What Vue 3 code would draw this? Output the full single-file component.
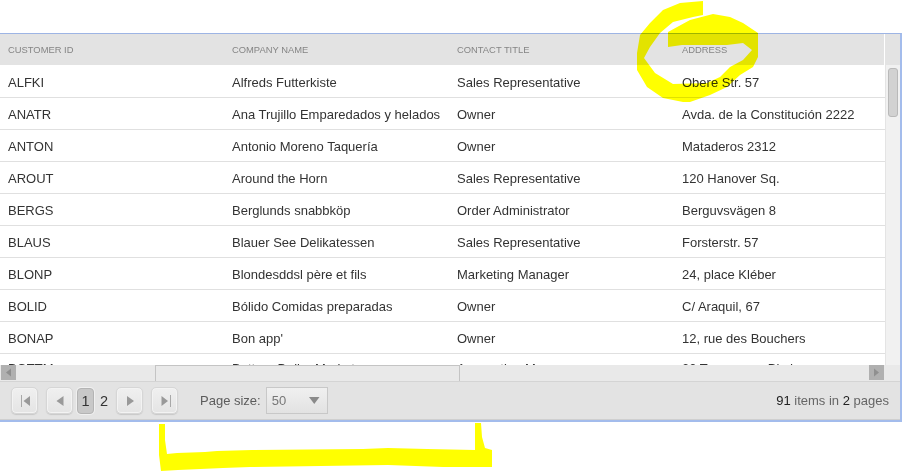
<script setup>
const columns = ['Customer ID', 'Company Name', 'Contact Title', 'Address']
const rows = [
  ['ALFKI', 'Alfreds Futterkiste', 'Sales Representative', 'Obere Str. 57'],
  ['ANATR', 'Ana Trujillo Emparedados y helados', 'Owner', 'Avda. de la Constitución 2222'],
  ['ANTON', 'Antonio Moreno Taquería', 'Owner', 'Mataderos 2312'],
  ['AROUT', 'Around the Horn', 'Sales Representative', '120 Hanover Sq.'],
  ['BERGS', 'Berglunds snabbköp', 'Order Administrator', 'Berguvsvägen 8'],
  ['BLAUS', 'Blauer See Delikatessen', 'Sales Representative', 'Forsterstr. 57'],
  ['BLONP', 'Blondesddsl père et fils', 'Marketing Manager', '24, place Kléber'],
  ['BOLID', 'Bólido Comidas preparadas', 'Owner', 'C/ Araquil, 67'],
  ['BONAP', "Bon app'", 'Owner', '12, rue des Bouchers'],
  ['BOTTM', 'Bottom-Dollar Markets', 'Accounting Manager', '23 Tsawassen Blvd.']
]
</script>

<template>
  <div class="page">
    <div class="grid">
      <div class="head">
        <div class="head-cols">
          <div v-for="c in columns" :key="c" class="head-cell">{{ c }}</div>
        </div>
        <div class="head-corner"></div>
      </div>

      <div class="body">
        <div class="rows">
          <div v-for="r in rows" :key="r[0]" class="row">
            <div v-for="(v, i) in r" :key="i" class="cell">{{ v }}</div>
          </div>
        </div>
        <div class="vscroll"><div class="vthumb"></div></div>
      </div>

      <div class="hbar">
        <div class="harrow">
          <svg width="15" height="15" viewBox="0 0 15 15"><path d="M10 3.500v8L5 7.500z" fill="#8f8f8f" /></svg>
        </div>
        <div class="htrack"><div class="hthumb"></div></div>
        <div class="harrow">
          <svg width="15" height="15" viewBox="0 0 15 15"><path d="M5 3.500v8l5-4z" fill="#8f8f8f" /></svg>
        </div>
        <div class="hcorner"></div>
      </div>

      <div class="pager">
        <button class="pbtn">
          <svg width="14" height="14" viewBox="0 0 14 14"><path d="M3.500 1v12" stroke="#a8a8a8" fill="none" /><path d="M12 2v10L5.500 7z" fill="#999" /></svg>
        </button>
        <button class="pbtn prev">
          <svg width="14" height="14" viewBox="0 0 14 14"><path d="M10.500 2v10L3.500 7z" fill="#999" /></svg>
        </button>
        <span class="pnum current">1</span>
        <span class="pnum">2</span>
        <button class="pbtn next">
          <svg width="14" height="14" viewBox="0 0 14 14"><path d="M4 2v10l7-5z" fill="#999" /></svg>
        </button>
        <button class="pbtn last">
          <svg width="14" height="14" viewBox="0 0 14 14"><path d="M3.500 2v10L10 7z" fill="#999" /><path d="M12.500 1v12" stroke="#a8a8a8" fill="none" /></svg>
        </button>
        <span class="size-label">Page size:</span>
        <div class="select">
          <span>50</span>
          <svg width="10.500" height="7" viewBox="0 0 10.500 7"><path d="M0 0h10.500L5.250 7z" fill="#8a8a8a" /></svg>
        </div>
        <div class="info"><b>91</b> items in <b>2</b> pages</div>
      </div>
    </div>

    <svg class="ink" width="905" height="472" viewBox="0 0 905 472">
      <path fill="#ffff00" d="M703 1 L680 3 L663 10 L650 23 L640 35 L637 53 L637 70 L647 87 L663 98 L683 102 L690 102 L710 95 L727 87 L740 75 L753 67 L758 57 L758 33 L743 23 L730 17 L713 14 L690 20 L668 32 L668 47 L682 45 L727 45 L743 43 L752 50 L743 60 L730 67 L720 77 L707 83 L673 84 L655 73 L644 58 L650 47 L660 33 L673 22 L693 17 L703 15 Z" />
      <path fill="#ffff00" d="M159 424 L165 424 L165 440 L167 454 L177 453 L205 452 L217 451 L252 450 L363 449 L388 448 L427 449 L475 450 L475 423 L481 423 L482 437 L485 448 L492 450 L492 467 L443 467 L388 465 L250 467 L223 468 L178 470 L161 471 L159 455 Z" />
    </svg>
  </div>
</template>

<style>
html, body { margin: 0; background: #fff; }
</style>

<style scoped>
.page {
  position: relative;
  width: 905px;
  height: 472px;
  padding-top: 33px;
  box-sizing: border-box;
  overflow: hidden;
  font-family: "Liberation Sans", Arial, sans-serif;
  font-size: 13px;
  color: #333;
}
.grid {
  width: 902px;
  box-sizing: border-box;
  border-top: 1px solid #9db4e4;
  border-right: 2px solid #a3bcec;
  border-bottom: 2px solid #a3bcec;
}
.head {
  display: flex;
  height: 31px;
  background: #e3e3e3;
}
.head-cols {
  width: 884px;
  overflow: hidden;
  display: grid;
  grid-template-columns: 224px 225px 225px 225px;
  flex: none;
}
.head-cell {
  padding-left: 8px;
  line-height: 31px;
  font-size: 9.4px;
  text-transform: uppercase;
  color: #858585;
  white-space: nowrap;
}
.head-corner {
  flex: 1;
  border-left: 1px solid #fff;
}
.body {
  display: flex;
  height: 300px;
}
.rows {
  width: 885px;
  flex: none;
  overflow: hidden;
  padding-top: 1px;
  box-sizing: border-box;
}
.row {
  display: grid;
  grid-template-columns: 224px 225px 225px 225px;
  height: 32px;
  box-sizing: border-box;
  border-bottom: 1px solid #e0e0e0;
  width: 899px;
}
.cell {
  padding-left: 8px;
  line-height: 33px;
  white-space: nowrap;
}
.row:last-child .cell {
  line-height: 30px;
}
.vscroll {
  flex: 1;
  background: #f1f1f1;
  border-left: 1px solid #e4e4e4;
  padding: 3px 2px 0 2px;
  box-sizing: border-box;
}
.vthumb {
  height: 49px;
  box-sizing: border-box;
  background: #d2d2d2;
  border: 1px solid #b9b9b9;
  border-radius: 3px;
}
.hbar {
  display: flex;
  height: 17px;
  background: #e9e9e9;
  border-bottom: 1px solid #d4d4d4;
  box-sizing: border-box;
}
.harrow {
  width: 15px;
  height: 15px;
  flex: none;
  background: #b0b0b0;
  overflow: hidden;
}
.harrow:first-child { margin-left: 1px; }
.harrow svg { display: block; }
.htrack {
  flex: 1;
  min-width: 0;
}
.hthumb {
  margin-left: 139px;
  width: 305px;
  height: 16px;
  box-sizing: border-box;
  background: #e9e9e9;
  border: 1px solid #c4c4c4;
  border-bottom: 0;
}
.hcorner {
  width: 16px;
  flex: none;
}
.pager {
  display: flex;
  align-items: center;
  height: 38px;
  box-sizing: border-box;
  background: #e3e3e3;
  border-bottom: 1px solid #cfcfcf;
  padding-left: 11px;
  padding-right: 11px;
  color: #5c5c5c;
}
.pbtn {
  width: 27px;
  height: 27px;
  padding: 0;
  box-sizing: border-box;
  display: flex;
  align-items: center;
  justify-content: center;
  background: linear-gradient(#f0f0f0, #e4e4e4);
  border: 1px solid #d6d6d6;
  border-radius: 5px;
  box-shadow: inset 0 0 0 1px #f3f3f3, 0 1px 1px #c8c8c8;
}
.prev { margin-left: 8px; }
.next { margin-left: 3px; }
.last { margin-left: 8px; }
.pnum {
  width: 17px;
  height: 26px;
  margin-left: 4px;
  line-height: 26px;
  text-align: center;
  font-size: 14.5px;
  color: #333;
  box-sizing: border-box;
}
.pnum + .pnum { margin-left: 1px; width: 18px; }
.current {
  background: #c8c8c8;
  border: 1px solid #b4b4b4;
  border-radius: 4px;
  line-height: 24px;
  box-shadow: 0 0 0 1px #f0f0f0;
}
.size-label {
  margin-left: 22px;
  font-size: 13px;
  white-space: nowrap;
}
.select {
  width: 62px;
  height: 27px;
  margin-left: 5px;
  padding: 0 7px 0 5px;
  box-sizing: border-box;
  display: flex;
  align-items: center;
  justify-content: space-between;
  background: linear-gradient(#f0f0f0, #e2e2e2);
  border: 1px solid #c8c8c8;
  color: #777;
  font-size: 13px;
}
.info {
  margin-left: auto;
  white-space: nowrap;
  font-size: 13px;
  color: #666;
}
.info b {
  font-weight: 400;
  color: #222;
}
.ink {
  position: absolute;
  left: 0;
  top: 0;
  mix-blend-mode: multiply;
  pointer-events: none;
}
</style>
